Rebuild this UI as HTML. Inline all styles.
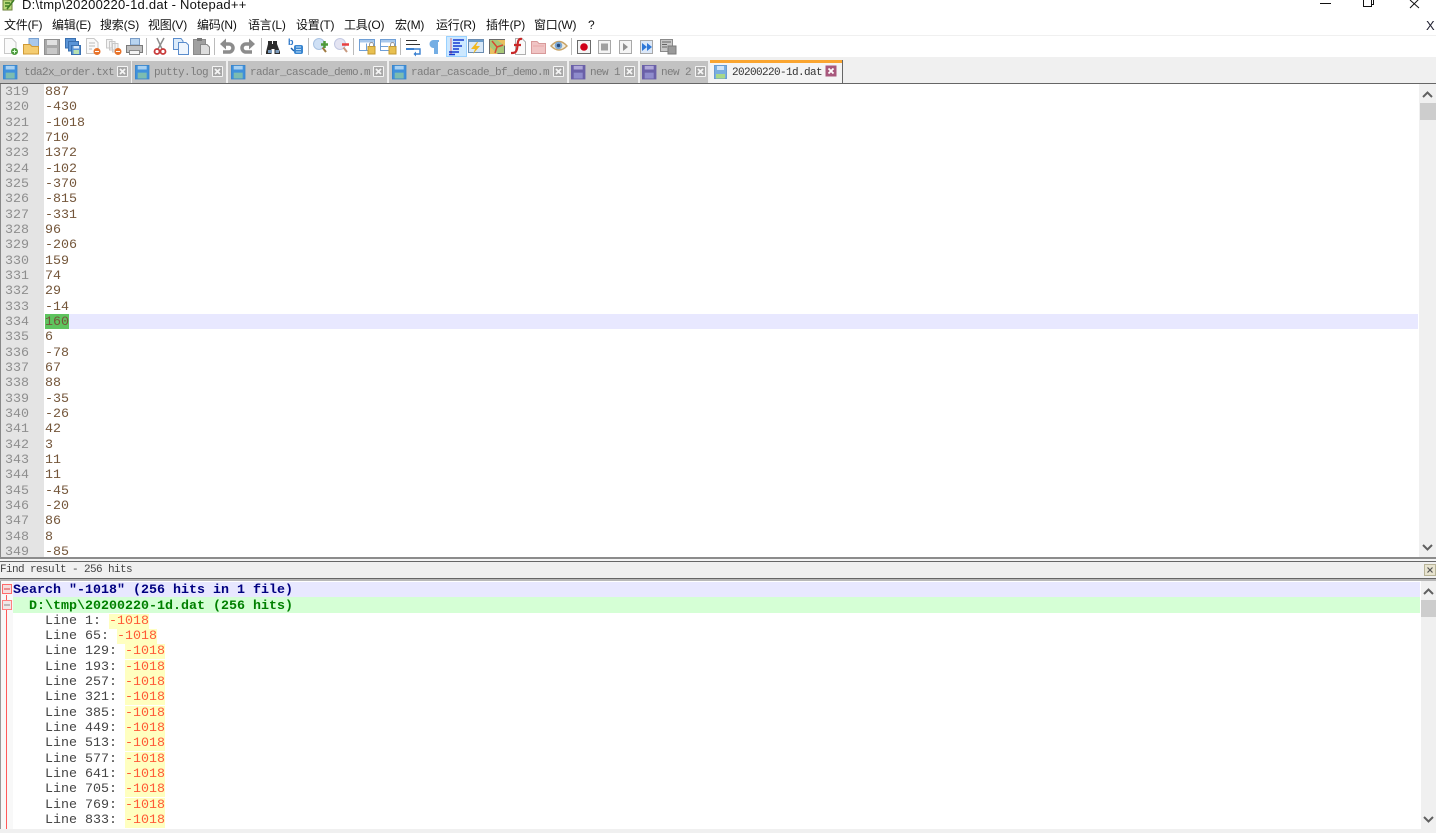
<!DOCTYPE html>
<html><head><meta charset="utf-8"><style>
html,body{margin:0;padding:0;width:1436px;height:833px;overflow:hidden;background:#fff}
body{position:relative;font-family:"Liberation Sans","Noto Sans CJK SC",sans-serif;filter:blur(.35px)}
div,span.a,svg{position:absolute}
.m{top:17px;font-size:12px;line-height:17px;color:#111;white-space:nowrap;letter-spacing:-.2px}
.tab{top:61px;height:22px;background:#c2c2c2;border-right:1px solid #eee}
.tt{position:absolute;top:4px;font:11px/16px "Liberation Mono",monospace;letter-spacing:-.6px;color:#7c7c7c;white-space:pre}
.code{font:13.33px/15.33px "Liberation Mono",monospace;white-space:pre}
.y{background:#ffffc0;color:#ff5a36}
</style></head><body>
<!-- title -->
<svg style="left:2px;top:0" width="13" height="11" viewBox="0 0 13 11"><rect x="1" y="0" width="9" height="10" fill="#b9d97a" stroke="#6b7f3a"/><path d="M3 3l5 0M3 6l5 0M5 9L12 0" stroke="#3f7d24" stroke-width="1.6"/></svg>
<div style="left:22px;top:-3px;font-size:13px;line-height:16px;color:#111;white-space:nowrap;letter-spacing:.25px">D:\tmp\20200220-1d.dat - Notepad++</div>
<svg style="left:1316px;top:0" width="120" height="12" viewBox="0 0 120 12" fill="none" stroke="#111"><path d="M4 3.500H15"/><path d="M47.500 -1V6.500H55.500V-1M55.500 4.500H57.500V-1"/><path d="M94 0L103 8M103 -1L94 8"/></svg>
<!-- menu -->
<div class="m" style="left:4px">文件(F)</div><div class="m" style="left:52px">编辑(E)</div><div class="m" style="left:100px">搜索(S)</div><div class="m" style="left:148px">视图(V)</div><div class="m" style="left:197px">编码(N)</div><div class="m" style="left:248px">语言(L)</div><div class="m" style="left:296px">设置(T)</div><div class="m" style="left:344px">工具(O)</div><div class="m" style="left:395px">宏(M)</div><div class="m" style="left:436px">运行(R)</div><div class="m" style="left:486px">插件(P)</div><div class="m" style="left:534px">窗口(W)</div><div class="m" style="left:588px">?</div>
<div class="m" style="left:1426px;font-size:13px;color:#223">X</div>
<div style="left:0;top:35px;width:1436px;height:1px;background:#f0f0f0"></div>
<!-- toolbar -->
<svg style="left:0;top:36px" width="700" height="21" viewBox="0 0 700 21">
<g stroke="#bbb" stroke-width="1"><path d="M146.500 2V19M214.500 2V19M261.500 2V19M308.500 2V19M353.500 2V19M400.500 2V19M571.500 2V19"/></g>
<!-- new --><path d="M4.500 2.500H12L16 6.500V17.500H4.500Z" fill="#fafafa" stroke="#c8c8c8"/><circle cx="14.500" cy="15.500" r="3.500" fill="#4c9a3c"/><path d="M12.500 15.500h4M14.500 13.500v4" stroke="#dfd" />
<!-- open --><path d="M29 2.500H38.500V12H29Z" fill="#a8c8ec" stroke="#7aa2d2"/><path d="M23.500 8.500H30L32 10.500H38.500V18H23.500Z" fill="#f4cc70" stroke="#cf9a36"/>
<!-- save --><path d="M44.500 3.500H59.500V18.500H44.500Z" fill="#a8a8a8" stroke="#909090"/><rect x="47" y="4" width="10" height="5" fill="#e0e0e0"/><rect x="47" y="12" width="10" height="6" fill="#c8c8c8"/>
<!-- saveall --><path d="M65.500 2.500H75.500V12H65.500Z" fill="#5a94d6" stroke="#3a70b0"/><path d="M68.500 5.500H78.500V15H68.500Z" fill="#5a94d6" stroke="#3a70b0"/><path d="M71.500 9.500H80.500V18.500H71.500Z" fill="#5a94d6" stroke="#3a70b0"/><rect x="73.500" y="14" width="5.500" height="4" fill="#b8e0b0"/><rect x="73.500" y="10" width="5.500" height="2.500" fill="#dceaf8"/>
<!-- close --><path d="M86.500 2.500H94L98 6.500V17.500H86.500Z" fill="#fafafa" stroke="#c8c8c8"/><path d="M89 7h6M89 10h6M89 13h3" stroke="#bbb"/><circle cx="97" cy="15.500" r="3.500" fill="#e8732a"/><path d="M95 15.500h4" stroke="#fff"/>
<!-- closeall --><path d="M106.500 3.500H112V12H106.500ZM109.500 5.500H115V14H109.500ZM112.500 7.500H118V16H112.500Z" fill="#f4f4f4" stroke="#c8c8c8"/><circle cx="118" cy="15.500" r="3.500" fill="#e8732a"/><path d="M116 15.500h4" stroke="#fff"/>
<!-- print --><path d="M130.500 2.500H139.500V9H130.500Z" fill="#b8d4f0" stroke="#7a9cc6"/><path d="M126.500 9.500H142.500V16.500H126.500Z" fill="#c0c0c0" stroke="#7a7a7a"/><path d="M129.500 14.500H139.500V18.500H129.500Z" fill="#f4f4f4" stroke="#8a8a8a"/>
<!-- cut --><path d="M164 2L158 13M157 2L162 13" stroke="#8c8c8c" stroke-width="1.500"/><circle cx="157" cy="15.500" r="2.500" fill="none" stroke="#c83a3a" stroke-width="1.800"/><circle cx="163" cy="15.500" r="2.500" fill="none" stroke="#c83a3a" stroke-width="1.800"/>
<!-- copy --><path d="M173.500 2.500H181L183 5V13.500H173.500Z" fill="#dcebfa" stroke="#5a8ccc"/><path d="M178.500 6.500H186L188.500 9V18.500H178.500Z" fill="#eef5fd" stroke="#5a8ccc"/>
<!-- paste --><path d="M193.500 3.500H205.500V18.500H193.500Z" fill="#a0a0a0" stroke="#8a8a8a"/><rect x="197" y="2" width="5" height="3" fill="#777"/><path d="M200.500 8.500H207L209.500 11V18.500H200.500Z" fill="#ddd" stroke="#888"/>
<!-- undo --><path d="M222 8H229A4 4 0 0 1 229 16H223" fill="none" stroke="#8c8c8c" stroke-width="3.500"/><path d="M226 2.500V13.500L220 8Z" fill="#8c8c8c"/>
<!-- redo --><path d="M253 8H246A4 4 0 0 0 246 16H252" fill="none" stroke="#8c8c8c" stroke-width="3.500"/><path d="M249 2.500V13.500L255 8Z" fill="#8c8c8c"/>
<!-- find --><path d="M268 5h4v3h1v-3h4v3l3 8v2h-5.500v-5h-3v5H266v-2l2-8Z" fill="#2c2c2c"/><rect x="268" y="14" width="4" height="3" fill="#7a9abc"/><rect x="275.500" y="14" width="3.500" height="3" fill="#7a9abc"/>
<!-- replace --><text x="288" y="9" font-family="Liberation Sans" font-size="9" font-weight="700" fill="#2f78c8">b</text><rect x="294" y="9" width="9" height="9" rx="2" fill="#3a86d0"/><path d="M296 11h5M296 13.500h5M296 16h5" stroke="#bfe0fa"/><path d="M291 12l3 3" stroke="#1c5fa6" stroke-width="1.500"/>
<!-- zoom in --><circle cx="319" cy="8" r="5.500" fill="#cfe0f5" stroke="#a9c2e2"/><path d="M322.500 11.500L326 16" stroke="#a07a40" stroke-width="2"/><path d="M321 8.500h7M324.500 5v7" stroke="#4f9a3a" stroke-width="2.500"/>
<!-- zoom out --><circle cx="340" cy="8" r="5.500" fill="#e4e4f2" stroke="#c2c8e2"/><path d="M343.500 11.500L347 16" stroke="#c89a80" stroke-width="2"/><path d="M342 8.500h7" stroke="#e84040" stroke-width="2.500"/>
<!-- sync v --><path d="M359.500 3.500H374.500V14.500H359.500Z" fill="#fff" stroke="#6f9fd6"/><rect x="360" y="4" width="14" height="2.500" fill="#a8c8ec"/><path d="M366.500 7.500V14" stroke="#6f9fd6"/><path d="M368 10.500H375V18H368Z" fill="#e8c050" stroke="#c49a30"/><path d="M369.500 10.500V8.500A2 2 0 0 1 373.500 8.500V10.500" fill="none" stroke="#999"/>
<!-- sync h --><path d="M380.500 3.500H395.500V14.500H380.500Z" fill="#fff" stroke="#6f9fd6"/><rect x="381" y="4" width="14" height="2.500" fill="#a8c8ec"/><path d="M381 10.500H388" stroke="#6f9fd6"/><path d="M389 10.500H396V18H389Z" fill="#e8c050" stroke="#c49a30"/><path d="M390.500 10.500V8.500A2 2 0 0 1 394.500 8.500V10.500" fill="none" stroke="#999"/>
<!-- wrap --><path d="M406 4.500H417M406 8.500H420" stroke="#333" stroke-width="1"/><path d="M406 13H420V18H415" fill="none" stroke="#3a80d0" stroke-width="1.400"/><path d="M406 13h8" stroke="#3a80d0" stroke-width="2"/><path d="M416 15.500v5l-2.500-2.500Z" fill="#3a80d0"/>
<!-- para --><path d="M437 5H433.500A3 3 0 0 0 433.500 11H435V18M437 5V18M437 5H439" fill="#74aee4" stroke="#74aee4" stroke-width="2"/>
<!-- indent active --><rect x="446.500" y="0.500" width="20" height="20" fill="#cce8ff" stroke="#99d1ff"/><path d="M451 2.500V18" stroke="#e03030" stroke-dasharray="1 1" stroke-width="1.200"/><path d="M453 4h11M453 7h7M453 10h9M453 13h6M449 16h10M449 18.500h6" stroke="#1438d0" stroke-width="1.500"/>
<!-- lang --><rect x="468.500" y="3.500" width="15" height="13" fill="#d8e8f8" stroke="#6a8cb0"/><rect x="469" y="4" width="14" height="2" fill="#6a9ccc"/><path d="M477 6L471 13H475L473 18L480 10H476L478 6Z" fill="#f0b820"/>
<!-- map --><rect x="489.500" y="3.500" width="15" height="14" fill="#a8c878" stroke="#6a6a6a"/><path d="M497 4L505 10V4ZM490 11L498 18H490Z" fill="#e8c060"/><path d="M492 5L497 11L495 17M497 11L503 9" stroke="#d84830" stroke-width="1.500" fill="none"/>
<!-- func --><path d="M515.500 2.500H522L525.500 6V18.500H515.500Z" fill="#fafafa" stroke="#b0b0b0"/><path d="M522 3C517 2 518 8 517 13C516 17 514 17 511 17M514 9H521" fill="none" stroke="#c82828" stroke-width="2.200"/>
<!-- folder --><path d="M531.500 5.500H537L539 7.500H545.500V17.500H531.500Z" fill="#f0c4c4" stroke="#d89a9a"/><path d="M533 10h11" stroke="#e8a8a8"/>
<!-- eye --><path d="M551 10Q559 1 567 10Q559 18 551 10Z" fill="#f0ece0" stroke="#c8a468" stroke-width="1.400"/><circle cx="558.500" cy="9.500" r="3.800" fill="#7ca8d4"/><circle cx="558.500" cy="9.500" r="1.700" fill="#284a78"/>
<!-- rec --><rect x="577.500" y="4.500" width="13" height="13" fill="#f4f4f4" stroke="#6a6a6a"/><circle cx="584" cy="11" r="3.800" fill="#d00018"/>
<!-- stop --><rect x="598.500" y="4.500" width="12" height="13" fill="#f4f4f4" stroke="#a8a8a8"/><rect x="601" y="7.500" width="7" height="7" fill="#a0a0a0"/>
<!-- play --><rect x="619.500" y="4.500" width="12" height="13" fill="#f4f4f4" stroke="#a8a8a8"/><path d="M623 7V15L628 11Z" fill="#909090"/>
<!-- multi --><rect x="640.500" y="4.500" width="12" height="13" fill="#dce8f8" stroke="#a8a8a8"/><path d="M642 7V15L647 11ZM647 7V15L652 11Z" fill="#2f78d8"/>
<!-- save macro --><rect x="660.500" y="3.500" width="12" height="12" fill="#c8c8c8" stroke="#8a8a8a"/><path d="M662 6h9M662 8.500h5M662 11h5" stroke="#666"/><rect x="668" y="10" width="8" height="8" fill="#9a9a9a" stroke="#7a7a7a"/>
</svg>
<!-- tabs -->
<div style="left:0;top:57px;width:1436px;height:26px;background:#f0f0f0"></div>
<div class="tab" style="left:0;width:131px"><div class="tt" style="left:24px">tda2x_order.txt</div></div>
<div class="tab" style="left:132px;width:94px"><div class="tt" style="left:22px">putty.log</div></div>
<div class="tab" style="left:228px;width:159px"><div class="tt" style="left:22px">radar_cascade_demo.m</div></div>
<div class="tab" style="left:389px;width:178px"><div class="tt" style="left:22px">radar_cascade_bf_demo.m</div></div>
<div class="tab" style="left:569px;width:69px"><div class="tt" style="left:21px">new 1</div></div>
<div class="tab" style="left:640px;width:68px"><div class="tt" style="left:21px">new 2</div></div>
<div class="tab" style="left:710px;top:60px;width:132px;height:23px;background:#f4f4f4;border-right:1px solid #666"><div style="left:0;top:0;width:132px;height:3px;background:#faa530"></div><div class="tt" style="left:22px;top:5px;color:#333">20200220-1d.dat</div></div>
<svg style="left:0;top:60px" width="845" height="23" viewBox="0 0 845 23">
<defs><g id="b"><rect x="0.500" y="0.500" width="15" height="15" fill="#3f90dc" stroke="#3a86cc"/><rect x="3" y="1" width="10" height="4" fill="#a8d0f0"/><rect x="3" y="8.500" width="10" height="6.500" fill="#7cbcb0"/></g>
<g id="p"><rect x="0.500" y="0.500" width="15" height="15" fill="#6a60a8" stroke="#6a60a8"/><rect x="3" y="1" width="10" height="4" fill="#b0a8d8"/><rect x="3" y="8.500" width="10" height="6.500" fill="#8f8ccc"/></g>
<g id="c"><rect width="11" height="11" rx="1" fill="#f4f4f4"/><rect x="1" y="1" width="9" height="9" fill="#a8a8a8"/><path d="M3 3L8 8M8 3L3 8" stroke="#f4f4f4" stroke-width="1.800"/></g></defs>
<use href="#b" transform="translate(3 5) scale(.9)"/><use href="#b" transform="translate(135 5) scale(.9)"/><use href="#b" transform="translate(231 5) scale(.9)"/><use href="#b" transform="translate(392 5) scale(.9)"/><use href="#p" transform="translate(571 5) scale(.9)"/><use href="#p" transform="translate(642 5) scale(.9)"/>
<g transform="translate(714 5)"><rect x="0.500" y="0.500" width="12" height="13" fill="#7aaee0" stroke="#6a9cd0"/><rect x="3" y="1" width="7" height="4" fill="#cfe4f8"/><rect x="2" y="9" width="9" height="4.500" fill="#a8d888"/></g>
<use href="#c" x="117" y="6"/><use href="#c" x="212" y="6"/><use href="#c" x="373" y="6"/><use href="#c" x="553" y="6"/><use href="#c" x="624" y="6"/><use href="#c" x="695" y="6"/>
<rect x="825.500" y="5.500" width="11" height="11" fill="#a8587c"/><path d="M828.500 8.500L833.500 13.500M833.500 8.500L828.500 13.500" stroke="#fff" stroke-width="1.800"/>
</svg>
<div style="left:0;top:83px;width:1436px;height:1px;background:#666"></div>
<!-- editor -->
<div style="left:0;top:84px;width:1436px;height:473px;overflow:hidden;background:#fff">
<div style="left:0;top:0;width:44px;height:473px;background:#e4e4e4"></div>
<div style="left:0;top:0;width:1px;height:473px;background:#888"></div>
<div style="left:45px;top:230px;width:1373px;height:15px;background:#e8e8ff"></div>
<div style="left:45px;top:230px;width:24px;height:15px;background:#5ec45e"></div>
<div class="code" style="left:5px;top:1px;color:#8e8e8e">319
320
321
322
323
324
325
326
327
328
329
330
331
332
333
334
335
336
337
338
339
340
341
342
343
344
345
346
347
348
349</div>
<div class="code" style="left:45px;top:1px;color:#74563a">887
-430
-1018
710
1372
-102
-370
-815
-331
96
-206
159
74
29
-14
160
6
-78
67
88
-35
-26
42
3
11
11
-45
-20
86
8
-85</div>
</div>
<div style="left:1419px;top:84px;width:17px;height:473px;background:#f0f0f0"></div>
<div style="left:1420px;top:103px;width:16px;height:17px;background:#cdcdcd"></div>
<svg style="left:1419px;top:84px" width="17" height="473" viewBox="0 0 17 473" fill="none" stroke="#606060" stroke-width="2"><path d="M4 13L8.500 8.500L13 13M4 461L8.500 465.500L13 461"/></svg>
<!-- splitter + panel title -->
<div style="left:0;top:557px;width:1436px;height:2px;background:#8c8c8c"></div>
<div style="left:0;top:559px;width:1436px;height:2px;background:#f4f4f4"></div>
<div style="left:0;top:561px;width:1436px;height:1px;background:#666"></div>
<div style="left:0;top:562px;width:1436px;height:16px;background:#f0f0f0"></div>
<div style="left:0;top:562px;font:11px/16px 'Liberation Mono',monospace;letter-spacing:-.6px;color:#444;white-space:pre">Find result - 256 hits</div>
<div style="left:1424px;top:564px;width:12px;height:12px;background:#e8e4d0;border:1px solid #b8b498;box-sizing:border-box"></div>
<svg style="left:1424px;top:564px" width="12" height="12" fill="none" stroke="#555" stroke-width="1.200"><path d="M3.500 3.500L8.500 8.500M8.500 3.500L3.500 8.500"/></svg>
<div style="left:0;top:578px;width:1436px;height:1px;background:#666"></div>
<div style="left:0;top:579px;width:1436px;height:2px;background:#b8b8b8"></div>
<!-- results -->
<div style="left:0;top:581px;width:1436px;height:248px;overflow:hidden;background:#fff">
<div style="left:0;top:0;width:13px;height:248px;background:#f8f8f8"></div>
<div style="left:0;top:0;width:1px;height:248px;background:#999"></div>
<div style="left:13px;top:1px;width:1407px;height:15px;background:#e8e8ff"></div>
<div style="left:13px;top:16px;width:1407px;height:16px;background:#d5ffd5"></div>
<svg style="left:0;top:0" width="13" height="248" fill="none"><path d="M6.500 14V248" stroke="#ff5a5a"/><rect x="2.500" y="3.500" width="9" height="9" fill="#f4dede" stroke="#ff6a6a"/><path d="M4 8h6" stroke="#e04040"/><rect x="2.500" y="19.500" width="9" height="9" fill="#f0e8e8" stroke="#ff8080"/><path d="M4 24h6" stroke="#888"/></svg>
<div class="code" style="left:13px;top:2px;color:#000080;font-weight:700">Search "-1018" (256 hits in 1 file)</div>
<div class="code" style="left:29px;top:17.500px;color:#008000;font-weight:700">D:\tmp\20200220-1d.dat (256 hits)</div>
<div class="code" style="left:45px;top:32.700px;color:#444">Line 1: <span class="y">-1018</span>
Line 65: <span class="y">-1018</span>
Line 129: <span class="y">-1018</span>
Line 193: <span class="y">-1018</span>
Line 257: <span class="y">-1018</span>
Line 321: <span class="y">-1018</span>
Line 385: <span class="y">-1018</span>
Line 449: <span class="y">-1018</span>
Line 513: <span class="y">-1018</span>
Line 577: <span class="y">-1018</span>
Line 641: <span class="y">-1018</span>
Line 705: <span class="y">-1018</span>
Line 769: <span class="y">-1018</span>
Line 833: <span class="y">-1018</span></div>
</div>
<div style="left:1421px;top:581px;width:15px;height:248px;background:#f0f0f0"></div>
<div style="left:1421px;top:600px;width:15px;height:17px;background:#cdcdcd"></div>
<svg style="left:1421px;top:581px" width="15" height="248" fill="none" stroke="#606060" stroke-width="2"><path d="M3 13L7.500 8.500L12 13M3 236L7.500 240.500L12 236"/></svg>
<div style="left:0;top:829px;width:1436px;height:4px;background:#f0f0f0"></div>
</body></html>
